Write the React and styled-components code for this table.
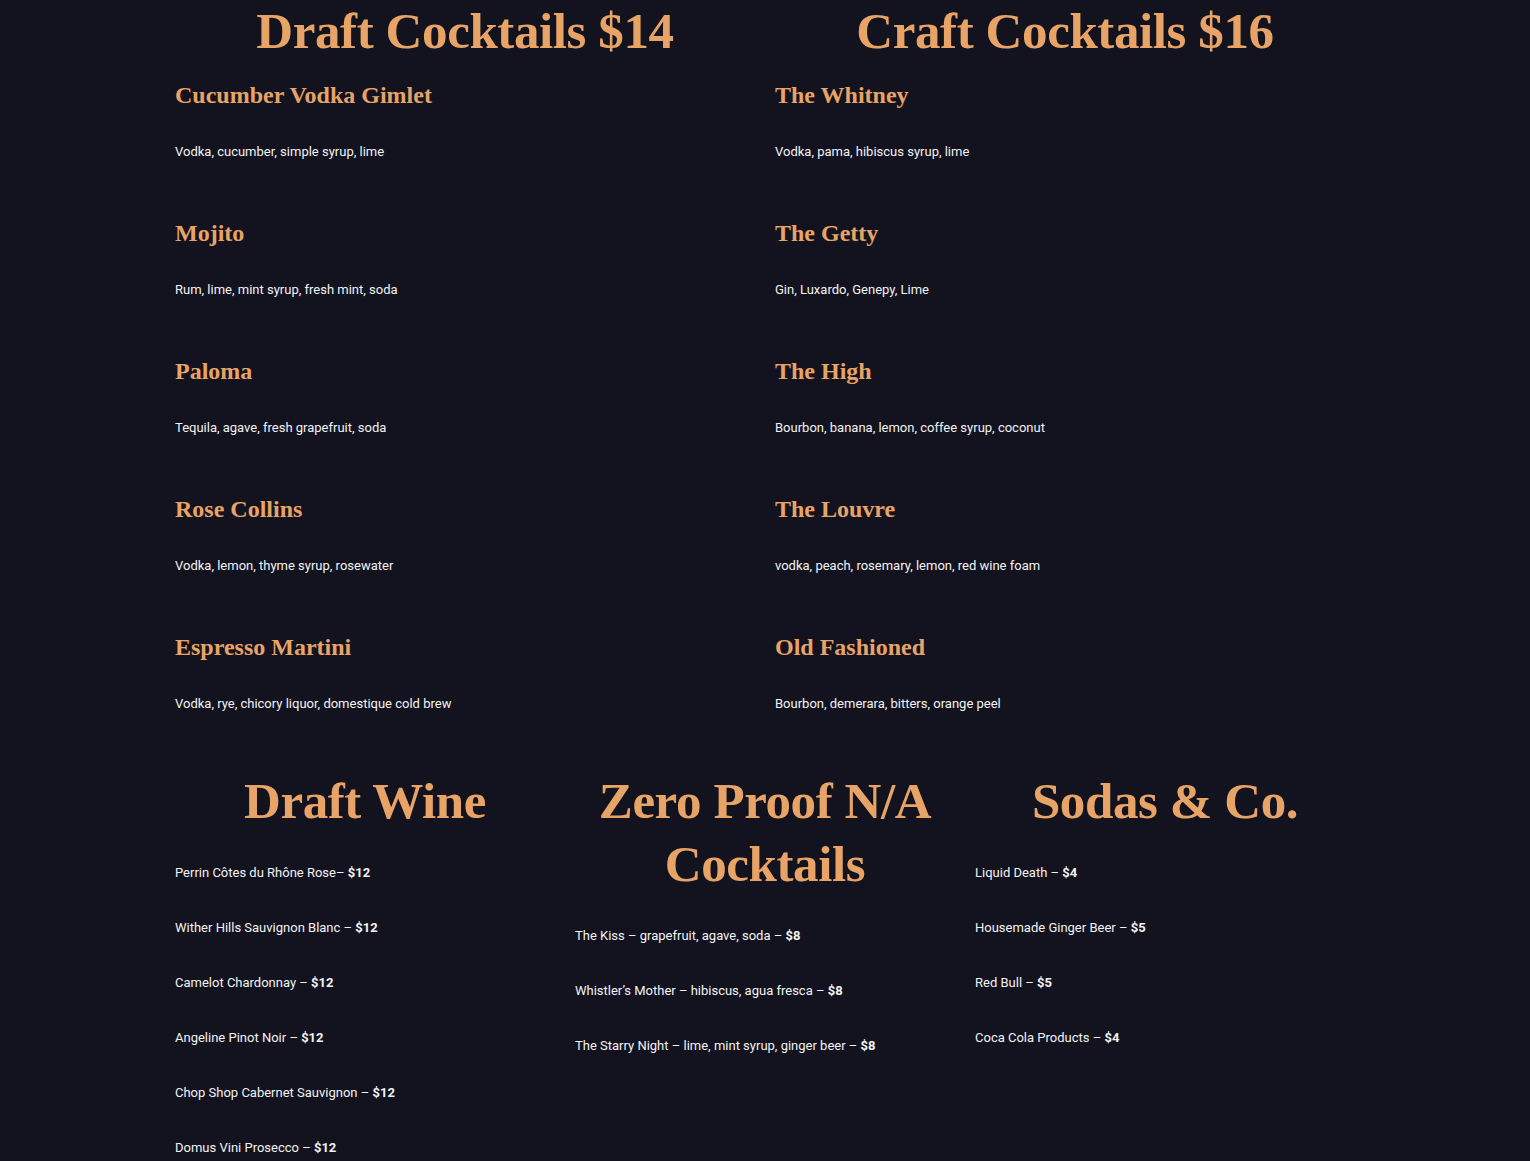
import React from "react";
import styled, { createGlobalStyle } from "styled-components";

const GlobalStyle = createGlobalStyle`
  html, body {
    margin: 0;
    padding: 0;
    background: #12131f;
  }
  body {
    font-family: Roboto, "Liberation Sans", sans-serif;
    color: #f2f2f2;
  }
`

const Page = styled.div`
  width: 1200px;
  margin: 0 auto;
  padding-bottom: 40px;
`
const Row = styled.div`
  display: grid;
  grid-template-columns: repeat(${props => props.cols}, 1fr);
  margin-top: ${props => props.top || 0}px;
`
const Column = styled.div`
  padding: 0 10px;
`
const SectionTitle = styled.h2`
  margin: 0 0 ${props => props.gap}px 0;
  font-family: "Liberation Serif", "DejaVu Serif", serif;
  font-weight: 700;
  font-size: 51px;
  line-height: 63px;
  letter-spacing: -0.4px;
  color: #e8a366;
  text-align: center;
`
const Item = styled.div`
  margin-bottom: 57px;
`
const ItemName = styled.h3`
  margin: 0 0 32px 0;
  font-family: "Liberation Serif", "DejaVu Serif", serif;
  font-weight: 700;
  font-size: 24px;
  line-height: 29px;
  color: #e8a366;
`
const ItemDesc = styled.p`
  margin: 0;
  font-size: 13px;
  line-height: 20px;
`
const Line = styled.p`
  margin: 0 0 35px 0;
  font-size: 13px;
  line-height: 20px;
`
const Price = styled.strong`
  font-weight: 700;
`

const draft = [
  ["Cucumber Vodka Gimlet", "Vodka, cucumber, simple syrup, lime"],
  ["Mojito", "Rum, lime, mint syrup, fresh mint, soda"],
  ["Paloma", "Tequila, agave, fresh grapefruit, soda"],
  ["Rose Collins", "Vodka, lemon, thyme syrup, rosewater"],
  ["Espresso Martini", "Vodka, rye, chicory liquor, domestique cold brew"],
]
const craft = [
  ["The Whitney", "Vodka, pama, hibiscus syrup, lime"],
  ["The Getty", "Gin, Luxardo, Genepy, Lime"],
  ["The High", "Bourbon, banana, lemon, coffee syrup, coconut"],
  ["The Louvre", "vodka, peach, rosemary, lemon, red wine foam"],
  ["Old Fashioned", "Bourbon, demerara, bitters, orange peel"],
]
const wine = [
  ["Perrin Côtes du Rhône Rose– ", "$12"],
  ["Wither Hills Sauvignon Blanc – ", "$12"],
  ["Camelot Chardonnay – ", "$12"],
  ["Angeline Pinot Noir – ", "$12"],
  ["Chop Shop Cabernet Sauvignon – ", "$12"],
  ["Domus Vini Prosecco – ", "$12"],
]
const zero = [
  ["The Kiss – grapefruit, agave, soda – ", "$8"],
  ["Whistler’s Mother – hibiscus, agua fresca – ", "$8"],
  ["The Starry Night – lime, mint syrup, ginger beer – ", "$8"],
]
const sodas = [
  ["Liquid Death – ", "$4"],
  ["Housemade Ginger Beer – ", "$5"],
  ["Red Bull – ", "$5"],
  ["Coca Cola Products – ", "$4"],
]

function CocktailColumn({ title, items }) {
  return (
    <Column>
      <SectionTitle gap={18}>{title}</SectionTitle>
      {items.map(([name, desc]) => (
        <Item key={name}>
          <ItemName>{name}</ItemName>
          <ItemDesc>{desc}</ItemDesc>
        </Item>
      ))}
    </Column>
  )
}

function PriceColumn({ title, items }) {
  return (
    <Column>
      <SectionTitle gap={30}>{title}</SectionTitle>
      {items.map(([text, price]) => (
        <Line key={text}>
          {text}<Price>{price}</Price>
        </Line>
      ))}
    </Column>
  )
}

export default function App() {
  return (
    <React.Fragment>
      <GlobalStyle />
      <Page>
        <Row cols={2}>
          <CocktailColumn title="Draft Cocktails $14" items={draft} />
          <CocktailColumn title="Craft Cocktails $16" items={craft} />
        </Row>
        <Row cols={3} top={-1}>
          <PriceColumn title="Draft Wine" items={wine} />
          <PriceColumn title={<>Zero Proof N/A<br />Cocktails</>} items={zero} />
          <PriceColumn title="Sodas & Co." items={sodas} />
        </Row>
      </Page>
    </React.Fragment>
  )
}
